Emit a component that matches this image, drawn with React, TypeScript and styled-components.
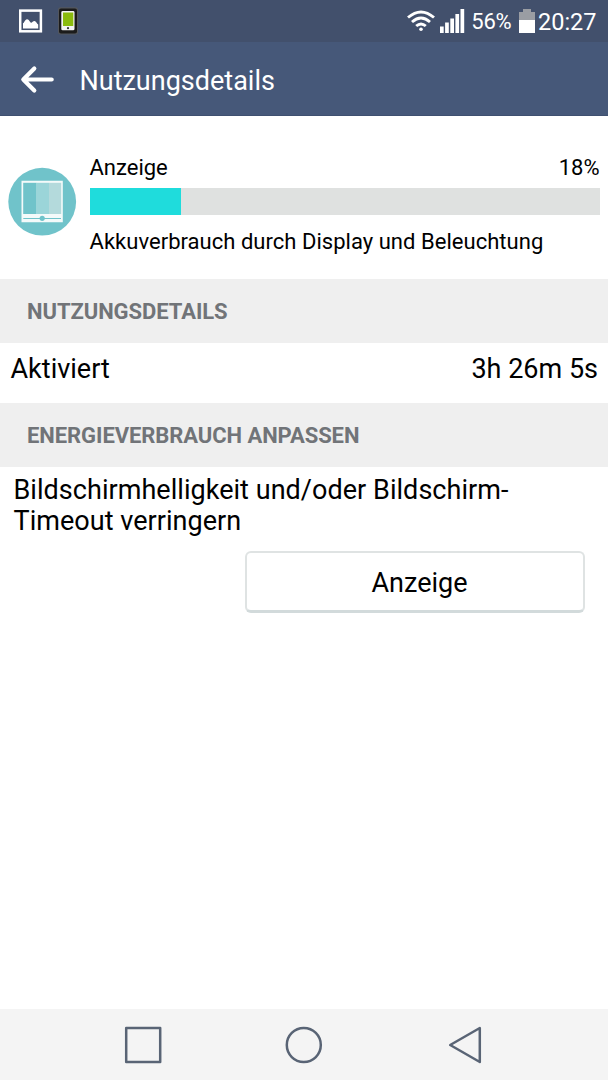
import React from "react";
import styled, { createGlobalStyle } from "styled-components";

const GlobalStyle = createGlobalStyle`
  * { box-sizing: border-box; }
  body { margin: 0; background: #fff; font-family: Roboto, "Liberation Sans", sans-serif; color: #000; }
`;

const Screen = styled.div`
  display: flex;
  flex-direction: column;
  width: 608px;
  height: 1080px;
  overflow: hidden;
  background: #fff;
`;

const Label = styled.span<{ $size: number; $spacing?: number }>`
  font-size: ${(p) => p.$size}px;
  letter-spacing: ${(p) => p.$spacing ?? 0}px;
  line-height: 30px;
  white-space: nowrap;
`;

const StatusBar = styled.div`
  flex: none;
  height: 42px;
  display: flex;
  align-items: center;
  justify-content: space-between;
  padding: 0 11.5px 0 19px;
  background: #42506c;
  color: #fff;
`;

const Notifications = styled.div`
  display: flex;
  align-items: center;
  gap: 14.5px;
`;

const SystemStatus = styled.div`
  display: flex;
  align-items: center;

  > span { padding-top: 2px; }
`;

const WifiSlot = styled.div`
  display: flex;
  width: 33.5px;
`;

const SignalSlot = styled.div`
  display: flex;
  width: 31px;
`;

const BatterySlot = styled.div`
  display: flex;
  padding: 0 3px 0 7.5px;
`;

const AppBar = styled.header`
  flex: none;
  height: 74px;
  display: flex;
  align-items: center;
  gap: 24.5px;
  padding: 2px 0 0 20px;
  background: #465879;
  border-bottom: 1px solid #3f5070;
  color: #fff;

  > span { padding-top: 2px; }
`;

const Summary = styled.section`
  flex: none;
  height: 162.5px;
  display: flex;
  gap: 12.5px;
  padding: 36px 8.5px 0 8px;
`;

const IconSlot = styled.div`
  flex: none;
  display: flex;
  width: 69px;
  padding-top: 15px;
`;

const SummaryBody = styled.div`
  flex: 1;
  display: flex;
  flex-direction: column;
`;

const SummaryHead = styled.div`
  display: flex;
  justify-content: space-between;
  height: 36px;
  padding-top: 1px;
`;

const Track = styled.div`
  height: 27px;
  margin-bottom: 12px;
  background: #dfe1e0;
`;

const Fill = styled.div`
  height: 100%;
  background: #1fdcdc;
`;

const SectionTitle = styled.h2`
  flex: none;
  height: 64px;
  margin: 0;
  display: flex;
  align-items: center;
  padding: 2px 27px 0;
  background: #efefef;
  color: #717478;
  font-size: 22px;
  font-weight: 700;
  letter-spacing: -0.07px;
`;

const Row = styled.div`
  flex: none;
  height: 60px;
  display: flex;
  align-items: center;
  justify-content: space-between;
  padding: 0 10px 7px 10.5px;
`;

const Advice = styled.p`
  margin: 0;
  padding: 8.5px 13.5px 0;
  font-size: 27px;
  letter-spacing: 0.04px;
  line-height: 31.2px;
`;

const ActionButton = styled.button`
  align-self: flex-end;
  width: 340px;
  height: 62px;
  margin: 13.1px 23.5px 0 0;
  padding: 4px 0 0 10px;
  border: 2px solid #dfe3e3;
  border-bottom: 3px solid #d2dadb;
  border-radius: 6px;
  background: #fff;
  color: #000;
  font-family: inherit;
`;

const NavBar = styled.nav`
  flex: none;
  height: 71px;
  margin-top: auto;
  display: flex;
  align-items: center;
  justify-content: space-between;
  padding: 0 124px 0 123px;
  background: #f4f4f4;
`;

const ImageIcon = () => (
  <svg width="24" height="24" viewBox="0 0 24 24">
    <rect x="1.2" y="1.6" width="20.7" height="20.7" fill="none" stroke="#fff" strokeWidth="2.5" />
    <path d="M4 19.5V14.3C5 14.5 6 10.5 8 10.3S11 13.5 12 13.8S14 12 15.5 12.1S18 15 19.2 15.6V19.5Z" fill="#fff" />
  </svg>
);

const PhoneIcon = () => (
  <svg width="20" height="28" viewBox="0 0 20 28">
    <rect x="0" y="0.2" width="20" height="27.4" rx="2.5" fill="#53565c" />
    <rect x="1" y="1.5" width="18" height="25" rx="2" fill="#1b1b1b" />
    <rect x="3.3" y="4" width="13.2" height="19.3" rx="1.4" fill="#f3f3f3" />
    <rect x="5" y="5.5" width="10.3" height="13.5" fill="#8abb0d" />
    <circle cx="10" cy="21.2" r="1.1" fill="#333" />
  </svg>
);

const WifiIcon = () => (
  <svg width="28" height="22" viewBox="0 0 28 22" fill="none" stroke="#fff" strokeWidth="2.9">
    <path d="M1 7.5Q14 -3.7 27 7.5" />
    <path d="M5 12Q14 4 23 12" />
    <path d="M9.2 16Q14 11.8 18.8 16" />
    <circle cx="14" cy="19.2" r="1.8" fill="#fff" stroke="none" />
  </svg>
);

const SignalIcon = () => (
  <svg width="25" height="24" viewBox="0 0 25 24" fill="#fff">
    <rect x="0" y="17.5" width="3.7" height="6.5" />
    <rect x="5.1" y="13.5" width="3.7" height="10.5" />
    <rect x="10.3" y="9.5" width="3.7" height="14.5" />
    <rect x="15.4" y="5" width="3.7" height="19" />
    <rect x="20.5" y="0" width="3.7" height="24" />
  </svg>
);

const BatteryIcon = () => (
  <svg width="16" height="24" viewBox="0 0 16 24">
    <path d="M0 3H4V0H12V3H16V11H0Z" fill="#9a9da3" />
    <rect y="11" width="16" height="13" fill="#fff" />
  </svg>
);

const BackArrow = () => (
  <svg width="35" height="30" viewBox="0 0 35 30" fill="none" stroke="#fff" strokeWidth="4.2" strokeLinecap="round" strokeLinejoin="round">
    <path d="M14.3 3.5L3.3 14.5L14.3 25.5M3.5 14.5H31.7" />
  </svg>
);

const DisplayIcon = () => (
  <svg width="69" height="69" viewBox="0 0 69 69">
    <circle cx="34.2" cy="34.7" r="33.9" fill="#70c3ca" />
    <path d="M13.5 13.8H54.8V55.2H13.5Z" fill="#f4fafa" />
    <rect x="15.2" y="15.8" width="13" height="31.2" fill="#70c3ca" />
    <rect x="28" y="15.8" width="13" height="31.2" fill="#9bd5d9" />
    <rect x="41" y="15.8" width="12.2" height="31.2" fill="#b4dadc" />
    <path d="M15.3 51.5H53" stroke="#70c3ca" strokeWidth="1.2" />
    <circle cx="34.2" cy="51.3" r="2.6" fill="#70c3ca" />
  </svg>
);

const NavIcons = () => (
  <>
    <svg width="40" height="40" viewBox="0 0 40 40" fill="none" stroke="#596475" strokeWidth="2.5" strokeLinejoin="round">
      <rect x="3.2" y="3" width="34" height="34" />
    </svg>
    <svg width="40" height="40" viewBox="0 0 40 40" fill="none" stroke="#596475" strokeWidth="2.5">
      <circle cx="19.8" cy="20" r="17" />
    </svg>
    <svg width="40" height="40" viewBox="0 0 40 40" fill="none" stroke="#596475" strokeWidth="2.5" strokeLinejoin="round">
      <path d="M35.8 3V37L6.2 20Z" />
    </svg>
  </>
);

const share = 18;

export default function App() {
  return (
    <>
      <GlobalStyle />
      <Screen>
        <StatusBar>
          <Notifications>
            <ImageIcon />
            <PhoneIcon />
          </Notifications>
          <SystemStatus>
            <WifiSlot><WifiIcon /></WifiSlot>
            <SignalSlot><SignalIcon /></SignalSlot>
            <Label $size={22} $spacing={-0.2}>56%</Label>
            <BatterySlot><BatteryIcon /></BatterySlot>
            <Label $size={23.5}>20:27</Label>
          </SystemStatus>
        </StatusBar>
        <AppBar>
          <BackArrow />
          <Label $size={27}>Nutzungsdetails</Label>
        </AppBar>
        <Summary>
          <IconSlot><DisplayIcon /></IconSlot>
          <SummaryBody>
            <SummaryHead>
              <Label $size={22}>Anzeige</Label>
              <Label $size={22}>{share}%</Label>
            </SummaryHead>
            <Track><Fill style={{ width: `${share}%` }} /></Track>
            <Label $size={22} $spacing={0.03}>Akkuverbrauch durch Display und Beleuchtung</Label>
          </SummaryBody>
        </Summary>
        <SectionTitle>NUTZUNGSDETAILS</SectionTitle>
        <Row>
          <Label $size={27}>Aktiviert</Label>
          <Label $size={27}>3h 26m 5s</Label>
        </Row>
        <SectionTitle>ENERGIEVERBRAUCH ANPASSEN</SectionTitle>
        <Advice>
          Bildschirmhelligkeit und/oder Bildschirm-
          <br />
          Timeout verringern
        </Advice>
        <ActionButton>
          <Label $size={27}>Anzeige</Label>
        </ActionButton>
        <NavBar>
          <NavIcons />
        </NavBar>
      </Screen>
    </>
  );
}
